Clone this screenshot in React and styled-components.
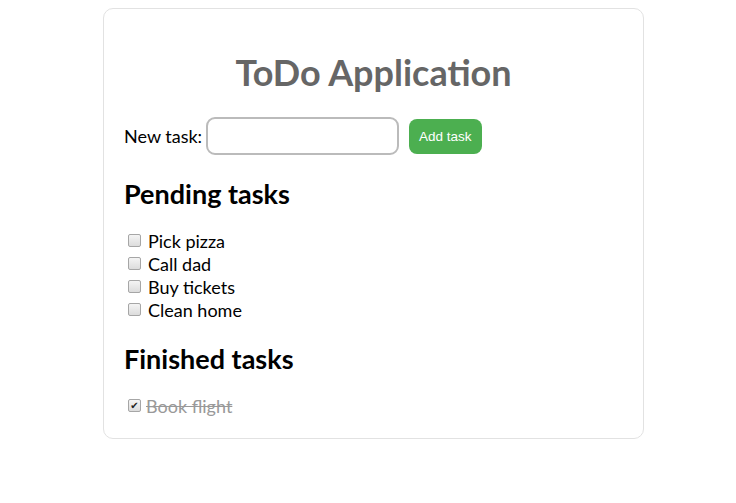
import React, { useState } from "react";
import styled, { createGlobalStyle } from "styled-components";

const Global = createGlobalStyle`
  html, body { margin: 0; padding: 0; background: #fff; }
  body { font-family: "Lato", "Noto Sans", sans-serif; color: #000; }
`;

const Page = styled.div`
  padding: 8px 0 0 11px;
  display: flex;
  justify-content: center;
`;

const Card = styled.div`
  width: 541px;
  box-sizing: border-box;
  border: 1px solid #e2e2e2;
  border-radius: 10px;
  padding: 41px 20px 18px 20px;
  height: 431px;
`;

const Title = styled.h1`
  margin: 0 0 23px 0;
  text-align: center;
  color: #666;
  font-size: 36px;
  font-weight: 700;
  line-height: 44px;
`;

const AddRow = styled.div`
  display: flex;
  align-items: center;
  font-size: 18px;
  height: 38px;
`;

const Label = styled.label`
  margin-right: 4px;
`;

const Input = styled.input`
  width: 193px;
  height: 38px;
  box-sizing: border-box;
  border: 2px solid #bbb;
  border-radius: 9px;
  outline: none;
  padding: 0 8px;
  font-size: 16px;
`;

const Button = styled.button`
  margin-left: 10px;
  height: 35px;
  padding: 0 10px;
  border: none;
  border-radius: 8px;
  background: #4caf50;
  color: #fff;
  font-family: "Liberation Sans", Arial, sans-serif;
  font-size: 13.5px;
  cursor: pointer;
`;

const Heading = styled.h2`
  margin: ${(p) => p.$top}px 0 0 0;
  font-size: 27px;
  font-weight: 700;
  line-height: 30px;
`;

const List = styled.ul`
  list-style: none;
  margin: ${(p) => p.$top}px 0 0 0;
  padding: 0 0 0 4px;
`;

const Item = styled.li`
  display: flex;
  align-items: center;
  height: 23px;
  font-size: 18px;
  color: ${(p) => (p.$done ? "#999" : "#000")};
`;

const Box = styled.span`
  width: 11px;
  height: 11px;
  border: 1px solid #a6a6a6;
  border-radius: 2px;
  background: linear-gradient(#f4f4f4, #dcdcdc);
  margin-right: ${(p) => (p.$done ? 3 : 7)}px;
  display: flex;
  align-items: center;
  justify-content: center;
  font-family: "DejaVu Sans", sans-serif;
  font-size: 10px;
  font-weight: 700;
  line-height: 1;
  color: #222;
  flex-shrink: 0;
  cursor: pointer;
`;

const Text = styled.span`
  text-decoration: ${(p) => (p.$done ? "line-through" : "none")};
  padding-left: ${(p) => (p.$done ? 2 : 0)}px;
`;

export default function App() {
  const [pending] = useState(["Pick pizza", "Call dad", "Buy tickets", "Clean home"]);
  const [done] = useState(["Book flight"]);
  return (
    <>
      <Global />
      <Page>
        <Card>
          <Title>ToDo Application</Title>
          <AddRow>
            <Label>New task:</Label>
            <Input type="text" />
            <Button>Add task</Button>
          </AddRow>
          <Heading $top={24}>Pending tasks</Heading>
          <List $top={20}>
            {pending.map((t) => (
              <Item key={t}>
                <Box />
                <Text>{t}</Text>
              </Item>
            ))}
          </List>
          <Heading $top={23}>Finished tasks</Heading>
          <List $top={20}>
            {done.map((t) => (
              <Item key={t} $done>
                <Box $done>✔</Box>
                <Text $done>{t}</Text>
              </Item>
            ))}
          </List>
        </Card>
      </Page>
    </>
  );
}
